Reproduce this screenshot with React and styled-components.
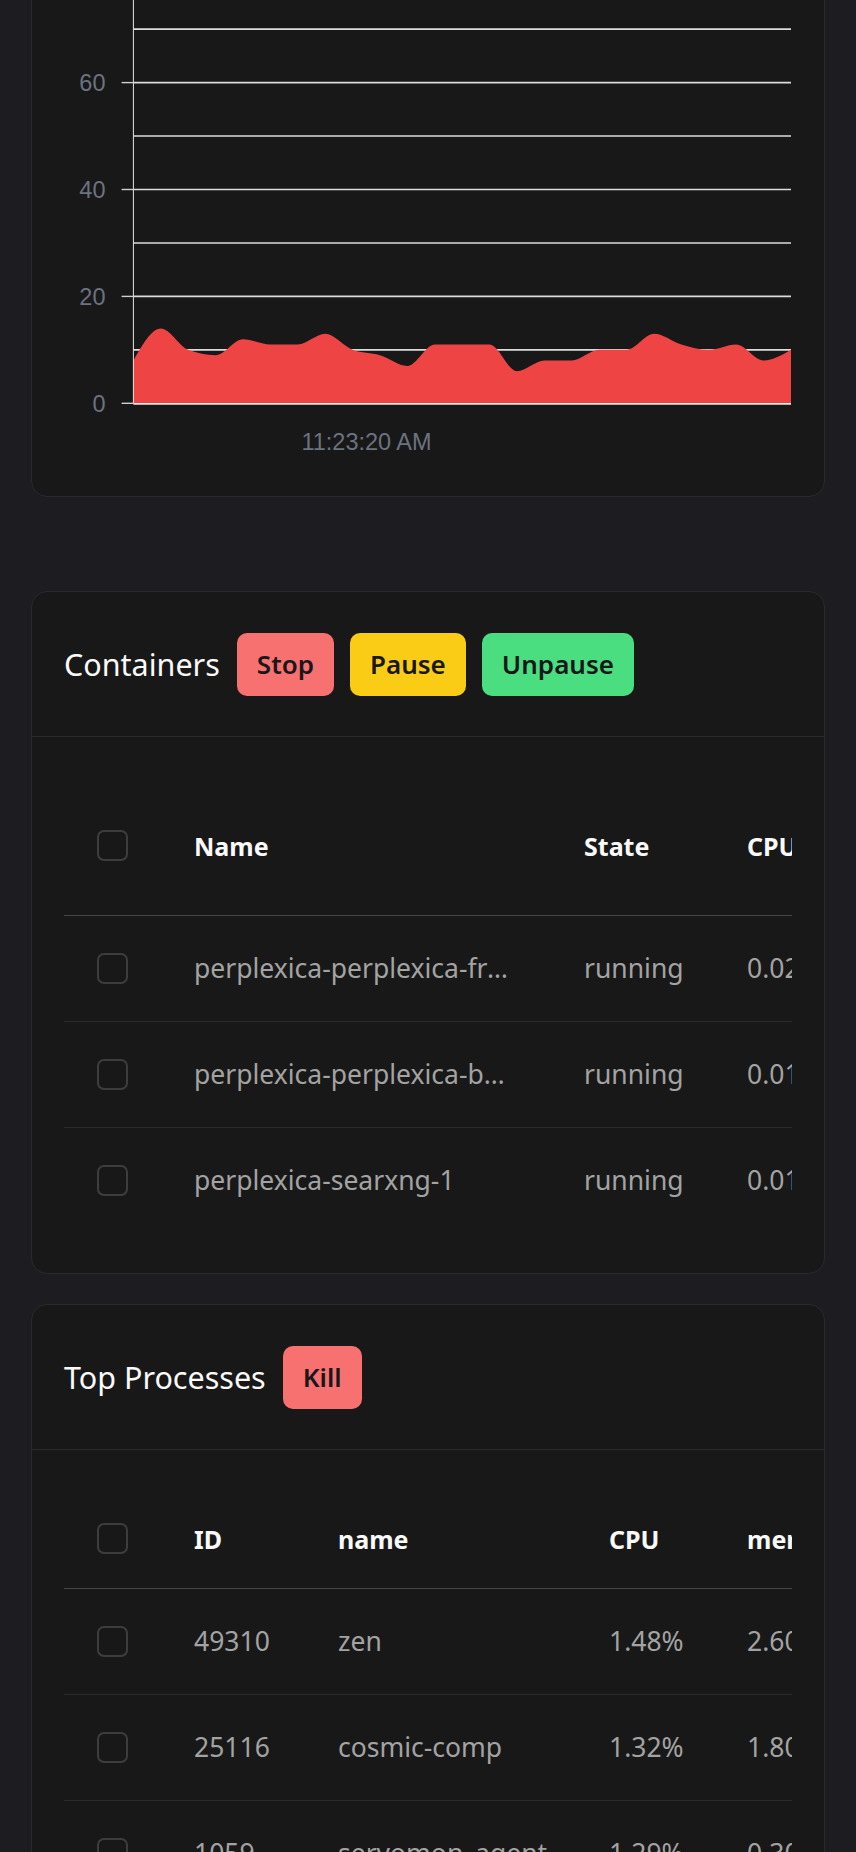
import React from 'react'
import styled, { createGlobalStyle } from 'styled-components'

const cpuHistory = [8, 14, 10, 9, 12, 11, 11, 13, 10, 9, 7, 11, 11, 11, 6, 8, 8, 10, 10, 13, 11, 10, 11, 8, 10]

const containers = [
    { name: 'perplexica-perplexica-frontend-1', state: 'running', cpu: '0.02%', mem: '48.1 MB' },
    { name: 'perplexica-perplexica-backend-1', state: 'running', cpu: '0.01%', mem: '92.4 MB' },
    { name: 'perplexica-searxng-1', state: 'running', cpu: '0.01%', mem: '131.7 MB' },
]

const processes = [
    { id: '49310', name: 'zen', cpu: '1.48%', mem: '2.60%' },
    { id: '25116', name: 'cosmic-comp', cpu: '1.32%', mem: '1.80%' },
    { id: '1059', name: 'servomon_agent', cpu: '1.29%', mem: '0.30%' },
]

// chart geometry, svg units
const CHART_W = 728
const CHART_H = 530
const AXIS_X = 69.4
const PLOT_RIGHT = 727
const BASE_Y = 462.3
const UNIT = 5.345 // px per percent

const yFor = (v) => BASE_Y - v * UNIT

// same maths as d3 curveMonotoneX
function monotonePath(pts) {
    const n = pts.length
    const t = new Array(n).fill(0)
    const sign = (v) => (v < 0 ? -1 : 1)
    for (let i = 1; i < n - 1; i++) {
        const h0 = pts[i][0] - pts[i - 1][0]
        const h1 = pts[i + 1][0] - pts[i][0]
        const s0 = (pts[i][1] - pts[i - 1][1]) / h0
        const s1 = (pts[i + 1][1] - pts[i][1]) / h1
        const p = (s0 * h1 + s1 * h0) / (h0 + h1)
        t[i] = (sign(s0) + sign(s1)) * Math.min(Math.abs(s0), Math.abs(s1), 0.5 * Math.abs(p)) || 0
    }
    const hA = pts[1][0] - pts[0][0]
    t[0] = (3 * (pts[1][1] - pts[0][1]) / hA - t[1]) / 2
    const hB = pts[n - 1][0] - pts[n - 2][0]
    t[n - 1] = (3 * (pts[n - 1][1] - pts[n - 2][1]) / hB - t[n - 2]) / 2
    let d = `M${pts[0][0]},${pts[0][1]}`
    for (let i = 0; i < n - 1; i++) {
        const dx = (pts[i + 1][0] - pts[i][0]) / 3
        d += ` C${pts[i][0] + dx},${pts[i][1] + dx * t[i]} ${pts[i + 1][0] - dx},${pts[i + 1][1] - dx * t[i + 1]} ${pts[i + 1][0]},${pts[i + 1][1]}`
    }
    return d
}

function CpuChart() {
    const step = (PLOT_RIGHT - AXIS_X) / (cpuHistory.length - 1)
    const pts = cpuHistory.map((v, i) => [AXIS_X + i * step, yFor(v)])
    const line = monotonePath(pts)
    const area = `${line} L${PLOT_RIGHT},${BASE_Y} L${AXIS_X},${BASE_Y} Z`
    const grid = [10, 20, 30, 40, 50, 60, 70, 80]
    const labels = [0, 20, 40, 60, 80]

    return (
        <ChartSvg width={CHART_W} height={CHART_H} viewBox={`0 0 ${CHART_W} ${CHART_H}`}>
            {grid.map((g) => (
                <line key={g} x1={AXIS_X} x2={PLOT_RIGHT} y1={yFor(g)} y2={yFor(g)} stroke="#dcdcdc" strokeWidth="1.6" />
            ))}
            <path d={area} fill="#ef4444" />
            <line x1={AXIS_X} x2={AXIS_X} y1={0} y2={BASE_Y} stroke="#e5e5e5" strokeWidth="1" />
            <line x1={AXIS_X} x2={PLOT_RIGHT} y1={BASE_Y + 0.6} y2={BASE_Y + 0.6} stroke="#e8e8e8" strokeWidth="1.8" />
            {labels.map((l) => (
                <g key={l}>
                    <line x1={AXIS_X - 11.8} x2={AXIS_X} y1={yFor(l)} y2={yFor(l)} stroke="#cfcfcf" strokeWidth="1.4" />
                    <AxisText x={41.5} y={yFor(l)} dy="0.36em" textAnchor="end">{l}</AxisText>
                </g>
            ))}
            <AxisText x={302.5} y={500.6} dy="0.36em" textAnchor="middle">11:23:20 AM</AxisText>
        </ChartSvg>
    )
}

function Checkbox() {
    return <Box role="checkbox" aria-checked="false" />
}

function App() {
    return (
        <>
            <GlobalStyle />
            <Page>
                <ChartCard>
                    <CpuChart />
                </ChartCard>

                <Card>
                    <CardHeader>
                        <CardTitle>Containers</CardTitle>
                        <ActionButton $bg="#f87171">Stop</ActionButton>
                        <ActionButton $bg="#facc15">Pause</ActionButton>
                        <ActionButton $bg="#4ade80">Unpause</ActionButton>
                    </CardHeader>
                    <TableSection>
                        <TableScroll>
                            <Table style={{ width: 97 + 390 + 163 + 160 + 200 }}>
                                <colgroup>
                                    <col style={{ width: 97 }} />
                                    <col style={{ width: 390 }} />
                                    <col style={{ width: 163 }} />
                                    <col style={{ width: 160 }} />
                                    <col style={{ width: 200 }} />
                                </colgroup>
                                <thead>
                                    <HeadRow $h={138}>
                                        <Th><Checkbox /></Th>
                                        <Th>Name</Th>
                                        <Th>State</Th>
                                        <Th>CPU</Th>
                                        <Th>Memory</Th>
                                    </HeadRow>
                                </thead>
                                <tbody>
                                    {containers.map((c) => (
                                        <Row key={c.name}>
                                            <Td><Checkbox /></Td>
                                            <Td $truncate>{c.name}</Td>
                                            <Td>{c.state}</Td>
                                            <Td>{c.cpu}</Td>
                                            <Td>{c.mem}</Td>
                                        </Row>
                                    ))}
                                </tbody>
                            </Table>
                        </TableScroll>
                    </TableSection>
                </Card>

                <Card>
                    <CardHeader>
                        <CardTitle>Top Processes</CardTitle>
                        <ActionButton $bg="#f87171">Kill</ActionButton>
                    </CardHeader>
                    <TableSection>
                        <TableScroll>
                            <Table style={{ width: 97 + 144 + 271 + 138 + 180 }}>
                                <colgroup>
                                    <col style={{ width: 97 }} />
                                    <col style={{ width: 144 }} />
                                    <col style={{ width: 271 }} />
                                    <col style={{ width: 138 }} />
                                    <col style={{ width: 180 }} />
                                </colgroup>
                                <thead>
                                    <HeadRow $h={98}>
                                        <Th><Checkbox /></Th>
                                        <Th>ID</Th>
                                        <Th>name</Th>
                                        <Th>CPU</Th>
                                        <Th>memory</Th>
                                    </HeadRow>
                                </thead>
                                <tbody>
                                    {processes.map((p) => (
                                        <Row key={p.id}>
                                            <Td><Checkbox /></Td>
                                            <Td>{p.id}</Td>
                                            <Td>{p.name}</Td>
                                            <Td>{p.cpu}</Td>
                                            <Td>{p.mem}</Td>
                                        </Row>
                                    ))}
                                </tbody>
                            </Table>
                        </TableScroll>
                    </TableSection>
                </Card>
            </Page>
        </>
    )
}

export default App

const GlobalStyle = createGlobalStyle`
    * {
        box-sizing: border-box;
    }
    body {
        margin: 0;
        background-color: #1c1c21;
        font-family: "Noto Sans", "Open Sans", sans-serif;
    }
`

const Page = styled.div`
    height: 100vh;
    overflow: hidden;
    padding: 0 31px;
    display: flex;
    flex-direction: column;
    gap: 30px;
`

const Card = styled.section`
    flex-shrink: 0;
    background-color: #181818;
    border: 1px solid #2a2a2d;
    border-radius: 16px;
`

const ChartCard = styled(Card)`
    margin-top: -60px;
    margin-bottom: 64px;
    padding: 0 32px 25px;
`

const ChartSvg = styled.svg`
    display: block;
`

const AxisText = styled.text`
    font-family: "Liberation Sans", Arial, sans-serif;
    font-size: 23.5px;
    fill: #6b7280;
`

const CardHeader = styled.div`
    height: 145px;
    padding: 0 32px;
    display: flex;
    align-items: center;
    gap: 16px;
    border-bottom: 1px solid #2a2a2d;
`

const CardTitle = styled.h2`
    margin: 0 1px 0 0;
    font-size: 30.5px;
    font-weight: 400;
    color: #fafafa;
`

const ActionButton = styled.button`
    height: 63px;
    padding: 0 20px;
    border: none;
    border-radius: 10px;
    background-color: ${(p) => p.$bg};
    color: #18181b;
    font-family: inherit;
    font-size: 26px;
    font-weight: 600;
    cursor: pointer;
`

const TableSection = styled.div`
    padding: 40px 32px 40px;
`

const TableScroll = styled.div`
    overflow: hidden;
`

const Table = styled.table`
    table-layout: fixed;
    border-collapse: collapse;
    white-space: nowrap;
`

const HeadRow = styled.tr`
    height: ${(p) => p.$h}px;
    border-bottom: 1px solid #454545;
`

const Row = styled.tr`
    height: 106px;
    border-bottom: 1px solid #2a2a2a;
    &:last-child {
        border-bottom: none;
    }
`

const Th = styled.th`
    padding: 0 33px;
    text-align: left;
    vertical-align: middle;
    font-size: 25px;
    font-weight: 700;
    color: #fafafa;
`

const Td = styled.td`
    padding: 0 33px;
    vertical-align: middle;
    font-size: 26.5px;
    color: #a3a3a3;
    overflow: ${(p) => (p.$truncate ? 'hidden' : 'visible')};
    text-overflow: ${(p) => (p.$truncate ? 'ellipsis' : 'clip')};
`

const Box = styled.span`
    display: block;
    width: 31px;
    height: 31px;
    border: 2px solid #3d3d3d;
    border-radius: 7px;
`
